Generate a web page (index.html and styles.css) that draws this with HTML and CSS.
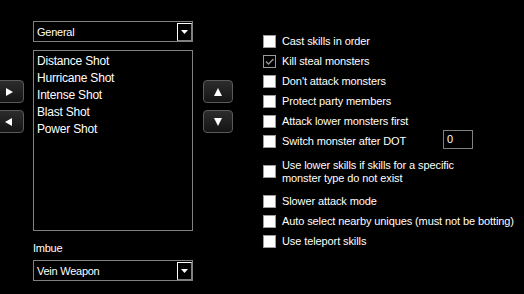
FILE: index.html
```html
<!DOCTYPE html>
<html>
<head>
<meta charset="utf-8">
<link rel="stylesheet" href="styles.css">
</head>
<body>
<div class="page">
  <div class="side-btns">
    <button class="btn"><svg width="10" height="10" viewBox="0 0 10 10"><path d="M2 1 L9 5 L2 9 Z" fill="#fff"/></svg></button>
    <button class="btn"><svg width="10" height="10" viewBox="0 0 10 10"><path d="M8 1 L1 5 L8 9 Z" fill="#fff"/></svg></button>
  </div>
  <div class="mid">
    <div class="combo"><span class="combo-text">General</span><span class="drop"><svg width="7" height="4" viewBox="0 0 7 4"><path d="M0 0 H7 L3.5 4 Z" fill="#fff"/></svg></span></div>
    <ul class="list">
      <li>Distance Shot</li>
      <li>Hurricane Shot</li>
      <li>Intense Shot</li>
      <li>Blast Shot</li>
      <li>Power Shot</li>
    </ul>
    <div class="label">Imbue</div>
    <div class="combo"><span class="combo-text">Vein Weapon</span><span class="drop"><svg width="7" height="4" viewBox="0 0 7 4"><path d="M0 0 H7 L3.5 4 Z" fill="#fff"/></svg></span></div>
  </div>
  <div class="order-btns">
    <button class="btn"><svg width="10" height="10" viewBox="0 0 10 10"><path d="M5 1 L9 9 L1 9 Z" fill="#fff"/></svg></button>
    <button class="btn"><svg width="10" height="10" viewBox="0 0 10 10"><path d="M1 1 L9 1 L5 9 Z" fill="#fff"/></svg></button>
  </div>
  <div class="options">
    <div class="opt"><span class="cb"></span><span>Cast skills in order</span></div>
    <div class="opt"><span class="cb checked"><svg width="11" height="11" viewBox="0 0 11 11"><path d="M2 5.5 L4.5 8 L9.5 3" fill="none" stroke="#9a9a9a" stroke-width="1.3"/></svg></span><span>Kill steal monsters</span></div>
    <div class="opt"><span class="cb"></span><span>Don't attack monsters</span></div>
    <div class="opt"><span class="cb"></span><span>Protect party members</span></div>
    <div class="opt"><span class="cb"></span><span>Attack lower monsters first</span></div>
    <div class="opt"><span class="cb"></span><span class="opt-wide">Switch monster after DOT</span><span class="num">0</span></div>
    <div class="opt tall"><span class="cb"></span><span>Use lower skills if skills for a specific<br>monster type do not exist</span></div>
    <div class="opt"><span class="cb"></span><span>Slower attack mode</span></div>
    <div class="opt"><span class="cb"></span><span>Auto select nearby uniques (must not be botting)</span></div>
    <div class="opt"><span class="cb"></span><span>Use teleport skills</span></div>
  </div>
</div>
</body>
</html>
```

FILE: styles.css
```css
html, body {
  margin: 0;
  padding: 0;
  background: #000;
  overflow: hidden;
}
body {
  width: 524px;
  height: 294px;
  font-family: "Liberation Sans", Arial, sans-serif;
  font-size: 11px;
  letter-spacing: -0.25px;
  color: #fff;
}
.page {
  display: flex;
  align-items: flex-start;
}
.page > div {
  flex: none;
}
.side-btns {
  margin-left: -7px;
  width: 31px;
  padding-top: 80px;
  display: flex;
  flex-direction: column;
  gap: 7px;
}
.btn {
  width: 31px;
  height: 23px;
  padding: 0;
  border: 1px solid #5a5a5a;
  border-radius: 4px;
  background: linear-gradient(#2c2c2c, #141414);
  display: flex;
  align-items: center;
  justify-content: center;
}
.order-btns .btn {
  width: 30px;
}
.mid {
  margin-left: 9px;
  width: 160px;
  padding-top: 21px;
}
.combo {
  height: 21px;
  box-sizing: border-box;
  border: 1px solid #808080;
  display: flex;
  align-items: center;
  justify-content: space-between;
}
.combo-text {
  padding-left: 3px;
}
.drop {
  width: 15px;
  height: 18px;
  box-sizing: border-box;
  border: 1px solid #fff;
  border-right-color: #808080;
  border-bottom-color: #808080;
  display: flex;
  align-items: center;
  justify-content: center;
}
.list {
  list-style: none;
  margin: 8px 0 0;
  padding: 2px 0 0 3px;
  height: 181px;
  box-sizing: border-box;
  border: 1px solid #808080;
  font-size: 12px;
  letter-spacing: -0.2px;
}
.list li {
  height: 17px;
  line-height: 17px;
}
.label {
  margin-top: 11px;
  height: 18px;
  line-height: 13px;
}
.order-btns {
  margin-left: 10px;
  width: 30px;
  padding-top: 80px;
  display: flex;
  flex-direction: column;
  gap: 7px;
}
.options {
  margin-left: 30px;
  padding-top: 35px;
  display: flex;
  flex-direction: column;
  white-space: nowrap;
  letter-spacing: -0.1px;
}
.opt {
  height: 20px;
  display: flex;
  align-items: flex-start;
  line-height: 13px;
}
.opt.tall {
  height: 40px;
  padding-top: 4px;
  box-sizing: border-box;
}
.opt.tall .cb {
  margin-top: 6px;
}
.cb {
  width: 13px;
  height: 13px;
  box-sizing: border-box;
  background: #fff;
  border: 1px solid #9a9a9a;
  margin-right: 6px;
  flex: none;
  display: flex;
  align-items: center;
  justify-content: center;
}
.cb.checked {
  background: #000;
}
.opt-wide {
  width: 161px;
}
.num {
  width: 30px;
  height: 19px;
  box-sizing: border-box;
  border: 1px solid #808080;
  margin-top: -5px;
  padding: 2px 0 0 3px;
}
```
